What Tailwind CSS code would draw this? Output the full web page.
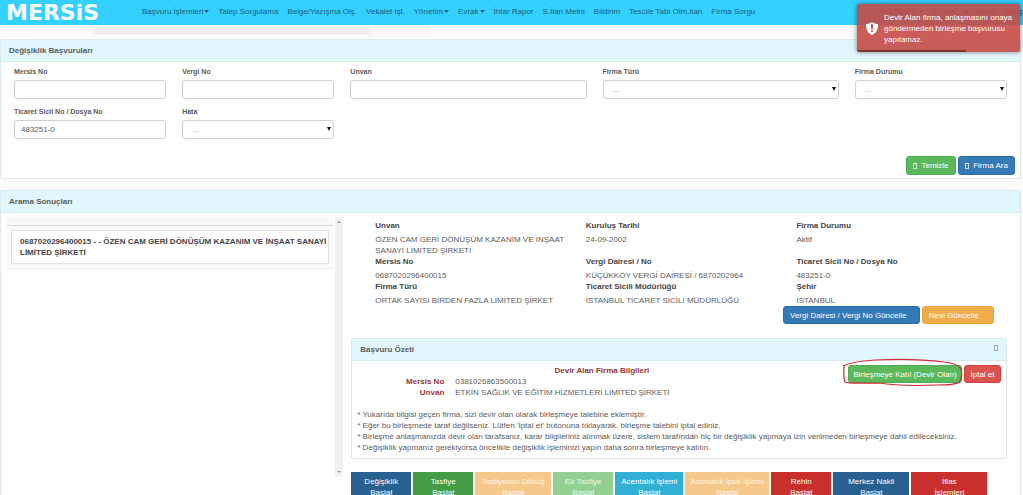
<!DOCTYPE html>
<html lang="tr">
<head>
<meta charset="utf-8">
<title>MERSİS - Değişiklik Başvuruları</title>
<script src="https://cdn.jsdelivr.net/npm/@tailwindcss/browser@4"></script>
</head>
<body class="relative h-screen overflow-hidden bg-[#fcfafb] font-['Liberation_Sans',Arial,sans-serif] text-[8px] leading-[11px] text-[#5c5c5c]">

<nav class="flex h-[25px] items-center bg-[#33d1ff] pl-[6px] text-[#1b6078]">
  <a href="#" class="w-[136px] shrink-0 font-['DejaVu_Sans',sans-serif] text-[22px] leading-[24px] font-bold text-white">MERSiS</a>
  <div class="flex items-center gap-[9px] whitespace-nowrap pb-[3px]">
    <a href="#" class="flex items-center gap-px">Başvuru İşlemleri<svg class="h-[3px] w-[5px]" viewBox="0 0 5 3"><path d="M0 0h5L2.500 3z" fill="currentColor"/></svg></a>
    <a href="#">Talep Sorgulama</a>
    <a href="#">Belge/Yazışma Olş.</a>
    <a href="#">Vekalet İşl.</a>
    <a href="#" class="flex items-center gap-px">Yönetim<svg class="h-[3px] w-[5px]" viewBox="0 0 5 3"><path d="M0 0h5L2.500 3z" fill="currentColor"/></svg></a>
    <a href="#" class="flex items-center gap-px">Evrak<svg class="h-[3px] w-[5px]" viewBox="0 0 5 3"><path d="M0 0h5L2.500 3z" fill="currentColor"/></svg></a>
    <a href="#">İhtar Rapor</a>
    <a href="#">S.İlan Metni</a>
    <a href="#">Bildirim</a>
    <a href="#">Tescile Tabi Olm.İlan</a>
    <a href="#">Firma Sorgu</a>
  </div>
  <div class="ml-auto flex items-center gap-[9px] whitespace-nowrap pb-[3px]">
    <a href="#">FATİH ERKEK ▾</a><a href="#">TSM ▾</a><a href="#">▾ Yardım</a><a href="#">Çıkış</a>
  </div>
</nav>

<div class="flex h-[14px] items-start pt-[2px] pl-[92px]">
  <div class="h-[8px] w-[278px] bg-[#f0eeee] [clip-path:polygon(4px_0,100%_0,100%_100%,0_100%)]"></div>
  <div class="h-[8px] w-[60px] bg-[#f8f5f4]"></div>
</div>

<section class="mr-[2px] rounded-[2px] border border-[#dde9ed] bg-white">
  <h2 class="flex h-[22px] items-center border-b border-[#d5e9ef] bg-[#e2f7fd] px-2 font-bold">Değişiklik Başvuruları</h2>
  <form class="px-[13px] pt-[4px] pb-[3px]" onsubmit="return false">
    <div class="grid grid-cols-12 gap-x-4 gap-y-[7px]">
      <div class="col-span-2"><label for="mersis" class="block h-[14px] pb-[3px] text-[7px] font-bold">Mersis No</label>
        <input id="mersis" class="block h-[19px] w-full rounded-[3px] border border-[#d0d0d0] px-[6px]"></div>
      <div class="col-span-2"><label for="vergi" class="block h-[14px] pb-[3px] text-[7px] font-bold">Vergi No</label>
        <input id="vergi" class="block h-[19px] w-full rounded-[3px] border border-[#d0d0d0] px-[6px]"></div>
      <div class="col-span-3"><label for="unvan" class="block h-[14px] pb-[3px] text-[7px] font-bold">Unvan</label>
        <input id="unvan" class="block h-[19px] w-full rounded-[3px] border border-[#d0d0d0] px-[6px]"></div>
      <div class="col-span-3"><label for="tur" class="block h-[14px] pb-[3px] text-[7px] font-bold">Firma Türü</label>
        <div class="relative"><select id="tur" class="block h-[19px] w-full appearance-none rounded-[3px] border border-[#d0d0d0] bg-white px-[9px] text-[#999]"><option>...</option></select><svg class="pointer-events-none absolute top-[7px] right-[3px] h-[4px] w-[4px]" viewBox="0 0 4 4"><path d="M0 0h4L2 4z" fill="#111"/></svg></div></div>
      <div class="col-span-2"><label for="durum" class="block h-[14px] pb-[3px] text-[7px] font-bold">Firma Durumu</label>
        <div class="relative"><select id="durum" class="block h-[19px] w-full appearance-none rounded-[3px] border border-[#d0d0d0] bg-white px-[9px] text-[#999]"><option>...</option></select><svg class="pointer-events-none absolute top-[7px] right-[3px] h-[4px] w-[4px]" viewBox="0 0 4 4"><path d="M0 0h4L2 4z" fill="#111"/></svg></div></div>
      <div class="col-span-2"><label for="sicil" class="block h-[14px] pb-[3px] text-[7px] font-bold whitespace-nowrap">Ticaret Sicil No / Dosya No</label>
        <input id="sicil" value="483251-0" class="block h-[19px] w-full rounded-[3px] border border-[#d0d0d0] px-[6px]"></div>
      <div class="col-span-2"><label for="hata" class="block h-[14px] pb-[3px] text-[7px] font-bold">Hata</label>
        <div class="relative"><select id="hata" class="block h-[19px] w-full appearance-none rounded-[3px] border border-[#d0d0d0] bg-white px-[9px] text-[#999]"><option>...</option></select><svg class="pointer-events-none absolute top-[7px] right-[3px] h-[4px] w-[4px]" viewBox="0 0 4 4"><path d="M0 0h4L2 4z" fill="#111"/></svg></div></div>
    </div>
    <div class="-mr-[8px] mt-[17px] flex justify-end gap-[2px] text-white">
      <button class="flex h-[19px] w-[50px] items-center justify-center gap-1 rounded-[3px] border border-[#4cae4c] bg-[#5cb85c]"><span class="h-[6px] w-[4px] border border-white/80"></span>Temizle</button>
      <button class="flex h-[19px] w-[57px] items-center justify-center gap-1 rounded-[3px] border border-[#2e6da4] bg-[#337ab7]"><span class="h-[6px] w-[4px] border border-white/80"></span>Firma Ara</button>
    </div>
  </form>
</section>

<section class="mt-[11px] mr-[2px] rounded-[2px] border border-[#dde9ed] bg-white">
  <h2 class="flex h-[22px] items-center border-b border-[#d5e9ef] bg-[#e2f7fd] px-2 font-bold">Arama Sonuçları</h2>
  <div class="flex">
    <div class="mt-[4px] ml-[6px] flex h-[260px] w-[33%] shrink-0">
      <div class="flex-1">
        <div class="h-[9px] border-b border-[#d8d8d8] bg-[#f9f9f9]"></div>
        <div class="border-b border-[#eee] bg-[#fbfbfb] p-[4px]">
          <a href="#" class="block border border-[#e2e2e2] bg-white py-[5px] pl-[8px] font-bold text-[#444]">0687020296400015 - - ÖZEN CAM GERİ DÖNÜŞÜM KAZANIM VE İNŞAAT SANAYİ LİMİTED ŞİRKETİ</a>
        </div>
      </div>
      <div class="ml-[2px] flex w-[8px] flex-col items-center justify-between bg-[#f1f1f1] py-1">
        <svg class="h-[2px] w-[4px]" viewBox="0 0 4 2"><path d="M0 2h4L2 0z" fill="#999"/></svg>
        <svg class="h-[2px] w-[4px]" viewBox="0 0 4 2"><path d="M0 0h4L2 2z" fill="#999"/></svg>
      </div>
    </div>

    <div class="mr-[13px] ml-[8px] flex-1 pt-[7px]">
      <dl class="ml-[24px] grid grid-cols-3 [&_dd]:pt-[3px] [&_dd]:pr-5 [&_dt]:font-bold [&_dt]:text-[#444]">
        <div><dt>Unvan</dt><dd>ÖZEN CAM GERİ DÖNÜŞÜM KAZANIM VE İNŞAAT SANAYİ LİMİTED ŞİRKETİ</dd></div>
        <div><dt>Kuruluş Tarihi</dt><dd>24-09-2002</dd></div>
        <div><dt>Firma Durumu</dt><dd>Aktif</dd></div>
        <div><dt>Mersis No</dt><dd>0687020296400015</dd></div>
        <div><dt>Vergi Dairesi / No</dt><dd class="whitespace-nowrap">KÜÇÜKKÖY VERGİ DAİRESİ / 6870202964</dd></div>
        <div><dt>Ticaret Sicil No / Dosya No</dt><dd>483251-0</dd></div>
        <div><dt>Firma Türü</dt><dd class="whitespace-nowrap">ORTAK SAYISI BİRDEN FAZLA LİMİTED ŞİRKET</dd></div>
        <div><dt>Ticaret Sicili Müdürlüğü</dt><dd class="whitespace-nowrap">İSTANBUL TİCARET SİCİLİ MÜDÜRLÜĞÜ</dd></div>
        <div><dt>Şehir</dt><dd>İSTANBUL</dd></div>
      </dl>
      <div class="mr-[13px] flex justify-end gap-[2px] text-white">
        <button class="h-[18px] w-[137px] rounded-[3px] border border-[#2e6da4] bg-[#337ab7] px-[6px] text-left">Vergi Dairesi / Vergi No Güncelle</button>
        <button class="h-[18px] w-[72px] rounded-[3px] border border-[#eea236] bg-[#f0ad4e] px-[6px] text-left">Nevi Güncelle</button>
      </div>

      <section class="mt-[14px] rounded-[2px] border border-[#dfe6e9]">
        <h3 class="flex h-[22px] items-center justify-between border-b border-[#d5e9ef] bg-[#e2f7fd] px-2 font-bold">Başvuru Özeti<span class="mb-1 h-[6px] w-[4px] border border-[#9aa9ae]"></span></h3>
        <div class="relative px-[5px] pt-[4px] pb-[5px]">
          <table class="w-[76%]">
            <caption class="text-center font-bold text-[#993333]">Devir Alan Firma Bilgileri</caption>
            <tr><th class="w-[87px] p-0 text-right font-bold text-[#993333]">Mersis No</th><td class="p-0 pl-[11px]">0381026863500013</td></tr>
            <tr><th class="w-[87px] p-0 text-right font-bold text-[#993333]">Unvan</th><td class="p-0 pl-[11px]">ETKİN SAĞLIK VE EĞİTİM HİZMETLERİ LİMİTED ŞİRKETİ</td></tr>
          </table>
          <p class="mt-[11px]">* Yukarıda bilgisi geçen firma, sizi devir olan olarak birleşmeye talebine eklemiştir.</p>
          <p>* Eğer bu birleşmede taraf değilseniz. Lütfen 'İptal et' butonuna tıklayarak, birleşme talebini iptal ediniz.</p>
          <p>* Birleşme anlaşmanızda devir olan tarafsanız, karar bilgileriniz alınmak üzere, sistem tarafından hiç bir değişiklik yapmaya izin verilmeden birleşmeye dahil edileceksiniz.</p>
          <p>* Değişiklik yapmanız gerekiyorsa öncelikle değişiklik işleminizi yapın daha sonra birleşmeye katılın.</p>
          <div class="absolute top-[4px] right-[5px] flex gap-[2px] text-white">
            <button class="h-[18px] w-[114px] rounded-[3px] border border-[#4cae4c] bg-[#5cb85c]">Birleşmeye Katıl (Devir Olan)</button>
            <button class="h-[18px] w-[37px] rounded-[3px] border border-[#d43f3a] bg-[#d9534f]">İptal et</button>
            <svg class="pointer-events-none absolute -top-[7px] -left-[5px] h-[30px] w-[120px]" viewBox="0 0 120 30" fill="none" stroke="#d42a35" stroke-width="1.200"><path d="M1 8C1 14 0 20 2 24c3 2 20 1 34 1 12 2 35 3 58 2 10 0 18 0 22-3 3-3 3-9 2-13-2-4-7-6-17-7C78 1 52 1 32 2 18 3 8 4 0 8"/></svg>
          </div>
        </div>
      </section>

      <div class="mt-[13px] flex gap-[2px] text-center text-white [&>button]:h-[30px] [&>button]:shrink-0">
        <button class="w-[60px] bg-[#286090]">Değişiklik<br>Başlat</button>
        <button class="w-[60px] bg-[#449d44]">Tasfiye<br>Başlat</button>
        <button class="w-[76px] bg-[#f6c88a] text-white/80">Tasfiyeden Dönüş<br>Başlat</button>
        <button class="w-[60px] bg-[#92d092] text-white/80">Ek Tasfiye<br>Başlat</button>
        <button class="w-[68px] bg-[#31b0d5]">Acentalık İşlemi<br>Başlat</button>
        <button class="w-[84px] bg-[#f6c88a] text-white/80">Acentalık İptal İşlemi<br>Başlat</button>
        <button class="w-[60px] bg-[#c9302c]">Rehin<br>Başlat</button>
        <button class="w-[76px] bg-[#286090]">Merkez Nakli<br>Başlat</button>
        <button class="w-[76px] bg-[#c9302c]">İflas<br>İşlemleri</button>
      </div>
    </div>
  </div>
</section>

<div role="alert" class="absolute top-[4px] right-[3px] flex h-[48px] w-[163px] items-center overflow-hidden rounded-[2px] bg-[#c54a46]/90 pl-[9px] text-white shadow-[0_0_5px_rgba(0,0,0,0.5)]">
  <svg class="mr-[6px] h-[13px] w-[12px] shrink-0" viewBox="0 0 12 13"><path d="M6 0c2 1.500 4 2 6 2 0 5-1 8.500-6 11C1 10.500 0 7 0 2c2 0 4-.5 6-2z" fill="#fff"/><path d="M5 2.500h2L6.600 7.500H5.400zM5.200 8.500h1.600V10H5.200z" fill="#a8312f"/></svg>
  <p class="whitespace-nowrap">Devir Alan firma, anlaşmasını onaya<br>göndermeden birleşme başvurusu<br>yapılamaz.</p>
  <div class="absolute bottom-0 left-0 h-[2px] w-2/3 bg-[#833331]"></div>
</div>
</body>
</html>
